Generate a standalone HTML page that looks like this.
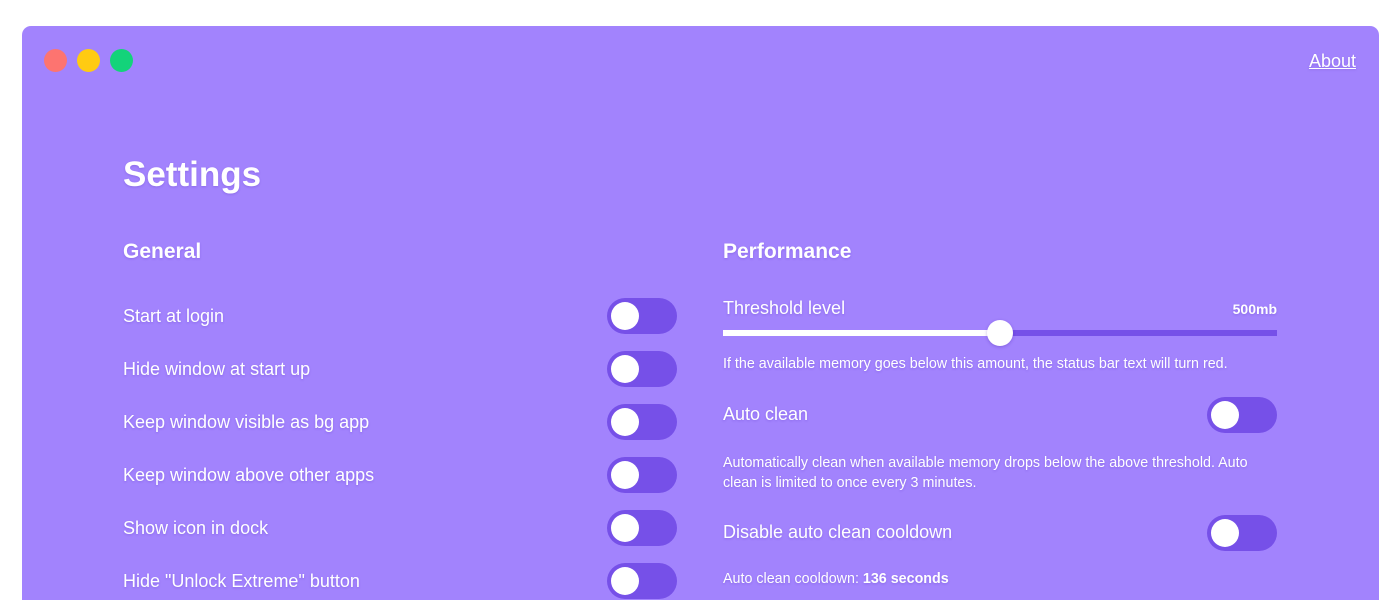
<!DOCTYPE html>
<html style="width:1400px;height:600px;overflow:hidden"><head><style>
*{margin:0;padding:0;box-sizing:border-box}
body{width:1400px;height:600px;background:#fff;overflow:hidden;font-family:"Liberation Sans",Arial,sans-serif;color:#fff;position:relative}
.win{position:absolute;left:22px;top:26px;width:1357px;height:574px;background:#a283fd;border-radius:9px 9px 0 0}
.dot{position:absolute;top:49px;width:23px;height:23px;border-radius:50%}
.t{position:absolute;text-shadow:0 1px 2px rgba(80,40,180,.25);white-space:nowrap}
.tog{position:absolute;width:70px;height:36px;border-radius:18px;background:#7650e8}
.tog::after{content:"";position:absolute;left:4px;top:4px;width:28px;height:28px;border-radius:50%;background:#fff}
.lbl{font-size:18px}
.small{font-size:14.3px}
</style></head><body>
<div class="win"></div>
<div class="dot" style="left:44px;background:#fd7470"></div>
<div class="dot" style="left:77px;background:#ffcb12"></div>
<div class="dot" style="left:110px;background:#13d37a"></div>
<div class="t" style="right:44px;top:51px;font-size:18px;text-decoration:underline">About</div>
<div class="t" style="left:123px;top:155px;font-size:35px;font-weight:bold">Settings</div>
<div class="t" style="left:123px;top:240px;font-size:21px;font-weight:bold">General</div>
<div class="t" style="left:723px;top:240px;font-size:21px;font-weight:bold">Performance</div>

<div class="t lbl" style="left:123px;top:306px">Start at login</div>
<div class="tog" style="left:607px;top:298px"></div>
<div class="t lbl" style="left:123px;top:359px">Hide window at start up</div>
<div class="tog" style="left:607px;top:351px"></div>
<div class="t lbl" style="left:123px;top:412px">Keep window visible as bg app</div>
<div class="tog" style="left:607px;top:404px"></div>
<div class="t lbl" style="left:123px;top:465px">Keep window above other apps</div>
<div class="tog" style="left:607px;top:457px"></div>
<div class="t lbl" style="left:123px;top:518px">Show icon in dock</div>
<div class="tog" style="left:607px;top:510px"></div>
<div class="t lbl" style="left:123px;top:571px">Hide "Unlock Extreme" button</div>
<div class="tog" style="left:607px;top:563px"></div>

<div class="t lbl" style="left:723px;top:298px">Threshold level</div>
<div class="t" style="right:123px;top:301px;font-size:14px;font-weight:bold">500mb</div>
<div style="position:absolute;left:723px;top:330px;width:554px;height:6px;background:#7650e8"></div>
<div style="position:absolute;left:723px;top:330px;width:277px;height:6px;background:#fff"></div>
<div style="position:absolute;left:987px;top:320px;width:26px;height:26px;border-radius:50%;background:#fff;box-shadow:0 1px 3px rgba(60,20,160,.3)"></div>
<div class="t small" style="left:723px;top:356px">If the available memory goes below this amount, the status bar text will turn red.</div>
<div class="t lbl" style="left:723px;top:404px">Auto clean</div>
<div class="tog" style="left:1207px;top:397px"></div>
<div class="t small" style="left:723px;top:453px;line-height:20px">Automatically clean when available memory drops below the above threshold. Auto<br>clean is limited to once every 3 minutes.</div>
<div class="t lbl" style="left:723px;top:522px">Disable auto clean cooldown</div>
<div class="tog" style="left:1207px;top:515px"></div>
<div class="t small" style="left:723px;top:571px">Auto clean cooldown: <b>136 seconds</b></div>
</body></html>
